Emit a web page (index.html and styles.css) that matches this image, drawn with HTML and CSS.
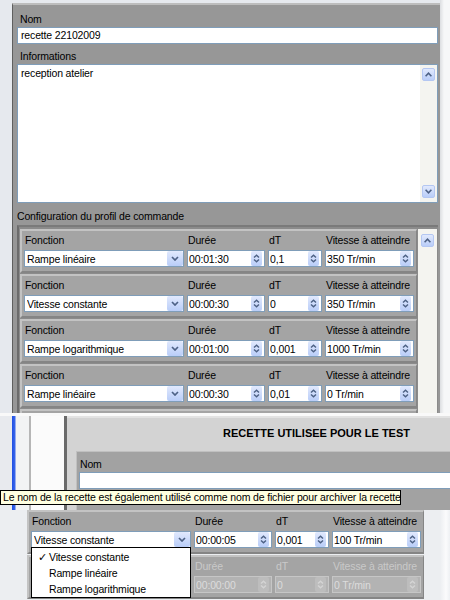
FILE: index.html
```html
<!DOCTYPE html>
<html lang="fr">
<head>
    <meta charset="UTF-8">
    <title>Recette - profil de commande</title>
    <link rel="stylesheet" href="styles.css">
</head>
<body>

    <!-- Capture 1 : edition de la recette -->
    <div class="recipe">
        <div class="recipe-panel">
            <div class="caption">Nom</div>
            <div class="edit">recette 22102009</div>
            <div class="caption info">Informations</div>
            <div class="memo">
                <div class="memo-text">reception atelier</div>
                <div class="scrollbar">
                    <div class="sb-btn"><svg width="7" height="5" viewBox="0 0 7 5"><path d="M0.6 4.2L3.5 1.2L6.4 4.2" fill="none" stroke="#4d6185" stroke-width="1.6"/></svg></div>
                    <div class="sb-btn"><svg width="7" height="5" viewBox="0 0 7 5"><path d="M0.6 0.8L3.5 3.8L6.4 0.8" fill="none" stroke="#4d6185" stroke-width="1.6"/></svg></div>
                </div>
            </div>
            <div class="caption section">Configuration du profil de commande</div>
            <div class="steps">
                <div class="step-list">
                    <div class="step">
                        <div class="col col-fn">
                            <div class="lbl">Fonction</div>
                            <div class="combo"><span>Rampe linéaire</span><i class="combo-btn"><svg width="8" height="5" viewBox="0 0 8 5"><path d="M1 1L4 4L7 1" fill="none" stroke="#4d6185" stroke-width="1.7"/></svg></i></div>
                        </div>
                        <div class="col col-dur">
                            <div class="lbl">Durée</div>
                            <div class="spin"><span>00:01:30</span><i class="spin-btn"><svg width="7" height="9" viewBox="0 0 7 9"><path d="M1 3.6L3.5 1.2L6 3.6M1 5.4L3.5 7.8L6 5.4" fill="none" stroke="#4d6185" stroke-width="1.4"/></svg></i></div>
                        </div>
                        <div class="col col-dt">
                            <div class="lbl">dT</div>
                            <div class="spin"><span>0,1</span><i class="spin-btn"><svg width="7" height="9" viewBox="0 0 7 9"><path d="M1 3.6L3.5 1.2L6 3.6M1 5.4L3.5 7.8L6 5.4" fill="none" stroke="#4d6185" stroke-width="1.4"/></svg></i></div>
                        </div>
                        <div class="col col-speed">
                            <div class="lbl">Vitesse à atteindre</div>
                            <div class="spin"><span>350 Tr/min</span><i class="spin-btn"><svg width="7" height="9" viewBox="0 0 7 9"><path d="M1 3.6L3.5 1.2L6 3.6M1 5.4L3.5 7.8L6 5.4" fill="none" stroke="#4d6185" stroke-width="1.4"/></svg></i></div>
                        </div>
                    </div>
                    <div class="step">
                        <div class="col col-fn">
                            <div class="lbl">Fonction</div>
                            <div class="combo"><span>Vitesse constante</span><i class="combo-btn"><svg width="8" height="5" viewBox="0 0 8 5"><path d="M1 1L4 4L7 1" fill="none" stroke="#4d6185" stroke-width="1.7"/></svg></i></div>
                        </div>
                        <div class="col col-dur">
                            <div class="lbl">Durée</div>
                            <div class="spin"><span>00:00:30</span><i class="spin-btn"><svg width="7" height="9" viewBox="0 0 7 9"><path d="M1 3.6L3.5 1.2L6 3.6M1 5.4L3.5 7.8L6 5.4" fill="none" stroke="#4d6185" stroke-width="1.4"/></svg></i></div>
                        </div>
                        <div class="col col-dt">
                            <div class="lbl">dT</div>
                            <div class="spin"><span>0</span><i class="spin-btn"><svg width="7" height="9" viewBox="0 0 7 9"><path d="M1 3.6L3.5 1.2L6 3.6M1 5.4L3.5 7.8L6 5.4" fill="none" stroke="#4d6185" stroke-width="1.4"/></svg></i></div>
                        </div>
                        <div class="col col-speed">
                            <div class="lbl">Vitesse à atteindre</div>
                            <div class="spin"><span>350 Tr/min</span><i class="spin-btn"><svg width="7" height="9" viewBox="0 0 7 9"><path d="M1 3.6L3.5 1.2L6 3.6M1 5.4L3.5 7.8L6 5.4" fill="none" stroke="#4d6185" stroke-width="1.4"/></svg></i></div>
                        </div>
                    </div>
                    <div class="step">
                        <div class="col col-fn">
                            <div class="lbl">Fonction</div>
                            <div class="combo"><span>Rampe logarithmique</span><i class="combo-btn"><svg width="8" height="5" viewBox="0 0 8 5"><path d="M1 1L4 4L7 1" fill="none" stroke="#4d6185" stroke-width="1.7"/></svg></i></div>
                        </div>
                        <div class="col col-dur">
                            <div class="lbl">Durée</div>
                            <div class="spin"><span>00:01:00</span><i class="spin-btn"><svg width="7" height="9" viewBox="0 0 7 9"><path d="M1 3.6L3.5 1.2L6 3.6M1 5.4L3.5 7.8L6 5.4" fill="none" stroke="#4d6185" stroke-width="1.4"/></svg></i></div>
                        </div>
                        <div class="col col-dt">
                            <div class="lbl">dT</div>
                            <div class="spin"><span>0,001</span><i class="spin-btn"><svg width="7" height="9" viewBox="0 0 7 9"><path d="M1 3.6L3.5 1.2L6 3.6M1 5.4L3.5 7.8L6 5.4" fill="none" stroke="#4d6185" stroke-width="1.4"/></svg></i></div>
                        </div>
                        <div class="col col-speed">
                            <div class="lbl">Vitesse à atteindre</div>
                            <div class="spin"><span>1000 Tr/min</span><i class="spin-btn"><svg width="7" height="9" viewBox="0 0 7 9"><path d="M1 3.6L3.5 1.2L6 3.6M1 5.4L3.5 7.8L6 5.4" fill="none" stroke="#4d6185" stroke-width="1.4"/></svg></i></div>
                        </div>
                    </div>
                    <div class="step">
                        <div class="col col-fn">
                            <div class="lbl">Fonction</div>
                            <div class="combo"><span>Rampe linéaire</span><i class="combo-btn"><svg width="8" height="5" viewBox="0 0 8 5"><path d="M1 1L4 4L7 1" fill="none" stroke="#4d6185" stroke-width="1.7"/></svg></i></div>
                        </div>
                        <div class="col col-dur">
                            <div class="lbl">Durée</div>
                            <div class="spin"><span>00:00:30</span><i class="spin-btn"><svg width="7" height="9" viewBox="0 0 7 9"><path d="M1 3.6L3.5 1.2L6 3.6M1 5.4L3.5 7.8L6 5.4" fill="none" stroke="#4d6185" stroke-width="1.4"/></svg></i></div>
                        </div>
                        <div class="col col-dt">
                            <div class="lbl">dT</div>
                            <div class="spin"><span>0,01</span><i class="spin-btn"><svg width="7" height="9" viewBox="0 0 7 9"><path d="M1 3.6L3.5 1.2L6 3.6M1 5.4L3.5 7.8L6 5.4" fill="none" stroke="#4d6185" stroke-width="1.4"/></svg></i></div>
                        </div>
                        <div class="col col-speed">
                            <div class="lbl">Vitesse à atteindre</div>
                            <div class="spin"><span>0 Tr/min</span><i class="spin-btn"><svg width="7" height="9" viewBox="0 0 7 9"><path d="M1 3.6L3.5 1.2L6 3.6M1 5.4L3.5 7.8L6 5.4" fill="none" stroke="#4d6185" stroke-width="1.4"/></svg></i></div>
                        </div>
                    </div>
                    <div class="step"></div>
                </div>
                <div class="scrollbar steps-bar">
                    <div class="sb-btn"><svg width="7" height="5" viewBox="0 0 7 5"><path d="M0.6 4.2L3.5 1.2L6.4 4.2" fill="none" stroke="#4d6185" stroke-width="1.6"/></svg></div>
                </div>
            </div>
        </div>
    </div>

    <!-- Capture 2 : formulaire de test + info-bulle -->
    <div class="designer">
        <div class="designer-side"></div>
        <div class="form">
            <div class="form-title">RECETTE UTILISEE POUR LE TEST</div>
            <div class="form-body">
                <div class="caption">Nom</div>
                <div class="edit edit-wide"></div>
            </div>
        </div>
        <div class="tooltip">Le nom de la recette est également utilisé comme nom de fichier pour archiver la recette</div>
    </div>

    <!-- Capture 3 : liste deroulante ouverte -->
    <div class="dropdown-demo">
        <div class="step-list">
            <div class="step">
                <div class="col col-fn">
                    <div class="lbl">Fonction</div>
                    <div class="combo"><span>Vitesse constante</span><i class="combo-btn"><svg width="8" height="5" viewBox="0 0 8 5"><path d="M1 1L4 4L7 1" fill="none" stroke="#4d6185" stroke-width="1.7"/></svg></i></div>
                </div>
                <div class="col col-dur">
                    <div class="lbl">Durée</div>
                    <div class="spin"><span>00:00:05</span><i class="spin-btn"><svg width="7" height="9" viewBox="0 0 7 9"><path d="M1 3.6L3.5 1.2L6 3.6M1 5.4L3.5 7.8L6 5.4" fill="none" stroke="#4d6185" stroke-width="1.4"/></svg></i></div>
                </div>
                <div class="col col-dt">
                    <div class="lbl">dT</div>
                    <div class="spin"><span>0,001</span><i class="spin-btn"><svg width="7" height="9" viewBox="0 0 7 9"><path d="M1 3.6L3.5 1.2L6 3.6M1 5.4L3.5 7.8L6 5.4" fill="none" stroke="#4d6185" stroke-width="1.4"/></svg></i></div>
                </div>
                <div class="col col-speed">
                    <div class="lbl">Vitesse à atteindre</div>
                    <div class="spin"><span>100 Tr/min</span><i class="spin-btn"><svg width="7" height="9" viewBox="0 0 7 9"><path d="M1 3.6L3.5 1.2L6 3.6M1 5.4L3.5 7.8L6 5.4" fill="none" stroke="#4d6185" stroke-width="1.4"/></svg></i></div>
                </div>
            </div>
            <div class="step disabled">
                <!-- colonne Fonction masquee par la liste ouverte -->
                <div class="col col-fn">
                    <div class="lbl"></div>
                    <div class="combo"></div>
                </div>
                <div class="col col-dur">
                    <div class="lbl">Durée</div>
                    <div class="spin"><span>00:00:00</span><i class="spin-btn"><svg width="7" height="9" viewBox="0 0 7 9"><path d="M1 3.6L3.5 1.2L6 3.6M1 5.4L3.5 7.8L6 5.4" fill="none" stroke="#d4d4d4" stroke-width="1.4"/></svg></i></div>
                </div>
                <div class="col col-dt">
                    <div class="lbl">dT</div>
                    <div class="spin"><span>0</span><i class="spin-btn"><svg width="7" height="9" viewBox="0 0 7 9"><path d="M1 3.6L3.5 1.2L6 3.6M1 5.4L3.5 7.8L6 5.4" fill="none" stroke="#d4d4d4" stroke-width="1.4"/></svg></i></div>
                </div>
                <div class="col col-speed">
                    <div class="lbl">Vitesse à atteindre</div>
                    <div class="spin"><span>0 Tr/min</span><i class="spin-btn"><svg width="7" height="9" viewBox="0 0 7 9"><path d="M1 3.6L3.5 1.2L6 3.6M1 5.4L3.5 7.8L6 5.4" fill="none" stroke="#d4d4d4" stroke-width="1.4"/></svg></i></div>
                </div>
            </div>
        </div>
        <ul class="menu">
            <li class="checked">Vitesse constante</li>
            <li>Rampe linéaire</li>
            <li>Rampe logarithmique</li>
        </ul>
    </div>

</body>
</html>
```

FILE: styles.css
```css
/* Look Windows XP / LabWindows */
* {
    box-sizing: border-box;
}

body {
    margin: 0;
    width: 450px;
    height: 600px;
    overflow: hidden;
    background-color: #eceef1;
    font-family: 'Liberation Sans', Arial, sans-serif;
    font-size: 10.5px;
    letter-spacing: -0.15px;
    color: #000;
}

/* Capture 1 */
.recipe {
    height: 413px;
    overflow: hidden;
    padding-top: 3px;
    background: linear-gradient(to right, #e6e9ee 0, #e6e9ee 440px, #dcdee1 440px, #f6f7f8 444px);
}

.recipe-panel {
    margin-left: 12px;
    width: 428px;
    height: 420px;
    background-color: #979797;
    border-left: 1px solid #5f5f5f;
    border-top: 2px solid #bdbdbd;
    padding: 7px 2px 0 4px;
}

.caption {
    height: 14px;
    line-height: 14px;
    padding-left: 3px;
    white-space: nowrap;
}

.caption.info {
    margin-top: 5px;
}

.caption.section {
    margin-top: 6px;
    padding-left: 0;
}

.edit {
    height: 17px;
    line-height: 15px;
    margin-top: 1px;
    padding-left: 3px;
    background-color: #fff;
    border: 1px solid #7f9db9;
}

.memo {
    display: flex;
    height: 139px;
    margin-top: 1px;
    background-color: #fff;
    border: 1px solid #7f9db9;
}

.memo-text {
    flex: 1;
    padding: 1px 3px;
    line-height: 14px;
}

.scrollbar {
    width: 17px;
    display: flex;
    flex-direction: column;
    justify-content: space-between;
    align-items: center;
    padding: 3px 0 4px;
    background-color: #f4f4f0;
}

.sb-btn {
    width: 13px;
    height: 13px;
    display: flex;
    align-items: center;
    justify-content: center;
    background: linear-gradient(#e1e9fd, #b9cdf8);
    border: 1px solid #b4c7f2;
    border-radius: 2px;
}

/* Liste des etapes */
.steps {
    display: flex;
    margin-top: 2px;
    height: 200px;
    background-color: #8b8b8b;
    border-left: 2px solid #6c6c6c;
    border-top: 2px solid #7a7a7a;
    padding: 2px 0 0 1px;
}

.step-list {
    width: 397px;
    margin-right: 1px;
}

.steps-bar {
    width: 19px;
    justify-content: flex-start;
    padding-top: 5px;
}

.step {
    display: flex;
    gap: 3px;
    width: 397px;
    height: 44px;
    margin-bottom: 1px;
    padding: 2px 2px 0 2px;
    background-color: #a4a4a4;
    border-top: 2px solid #c3c3c3;
    border-left: 2px solid #c3c3c3;
    border-bottom: 2px solid #858585;
    border-right: 1px solid #858585;
}

.col .lbl {
    height: 14px;
    line-height: 14px;
    margin-bottom: 3px;
    padding-left: 1px;
    white-space: nowrap;
}

.col-fn { width: 160px; }
.col-dur { width: 78px; }
.col-dt { width: 54px; }
.col-speed { width: 89px; }

.combo, .spin {
    display: flex;
    align-items: center;
    height: 17px;
    background-color: #fff;
    border: 1px solid #7f9db9;
    white-space: nowrap;
}

.combo { padding-left: 2px; }
.spin { padding-left: 1px; }

.combo span, .spin span {
    flex: 1;
    overflow: hidden;
}

.combo-btn, .spin-btn {
    display: flex;
    align-items: center;
    justify-content: center;
    height: 15px;
    background: linear-gradient(#e1e9fd, #b9cdf8);
    border-radius: 2px;
}

.combo-btn {
    width: 16px;
}

.spin-btn {
    width: 11px;
    margin-right: 2px;
}

/* Etape desactivee */
.step.disabled .lbl {
    color: #c9c9c9;
}

.step.disabled .combo, .step.disabled .spin {
    background-color: #b3b3b3;
    border-color: #c6c6c6;
    color: #dcdcdc;
}

.step.disabled .combo-btn, .step.disabled .spin-btn {
    background: #bdbdbd;
}

/* Capture 2 */
.designer {
    position: relative;
    display: flex;
    height: 97px;
    border-top: 3px solid #f9f9f9;
}

.designer-side {
    width: 67px;
    background: linear-gradient(to right, #e8eaee 0, #e8eaee 12px, #1f4fe4 12px, #3a66ea 15px, #f2f3f4 16px, #f2f3f4 29px, #b6b6b6 29px, #b6b6b6 31px, #fbfbfb 31px, #fbfbfb 64px, #6a6a6a 64px, #6a6a6a 67px);
}

.form {
    flex: 1;
    background-color: #d3d3d3;
    border-top: 2px solid #e2e2e2;
}

.form-title {
    height: 33px;
    padding: 8px 0 0 156px;
    line-height: 14px;
    font-size: 11px;
    font-weight: bold;
    letter-spacing: 0;
    white-space: nowrap;
}

.form-body {
    height: 62px;
    margin-left: 9px;
    padding: 5px 0 0 2px;
    background-color: #a2a2a2;
    border-top: 1px solid #c0c0c0;
    border-left: 1px solid #c0c0c0;
}

.form-body .caption {
    padding-left: 1px;
}

.edit-wide {
    margin-right: -4px;
}

.tooltip {
    position: absolute;
    left: 0;
    top: 74px;
    width: 401px;
    height: 15px;
    padding: 0 2px;
    line-height: 13px;
    white-space: nowrap;
    background-color: #ffffe1;
    border: 1px solid #000;
}

/* Capture 3 */
.dropdown-demo {
    position: relative;
    height: 90px;
    padding-left: 27px;
    background: linear-gradient(to right, #eceef1 0, #eceef1 440px, #fbfbfc 446px, #eef0f3 450px);
}

.menu {
    position: absolute;
    left: 31px;
    top: 37px;
    width: 160px;
    height: 51px;
    margin: 0;
    padding: 1px 0 0;
    list-style: none;
    background-color: #fff;
    border: 1px solid #000;
}

.menu li {
    height: 16px;
    line-height: 16px;
    padding-left: 17px;
    position: relative;
}

.menu li.checked:before {
    content: '\2713';
    position: absolute;
    left: 6px;
}
```
